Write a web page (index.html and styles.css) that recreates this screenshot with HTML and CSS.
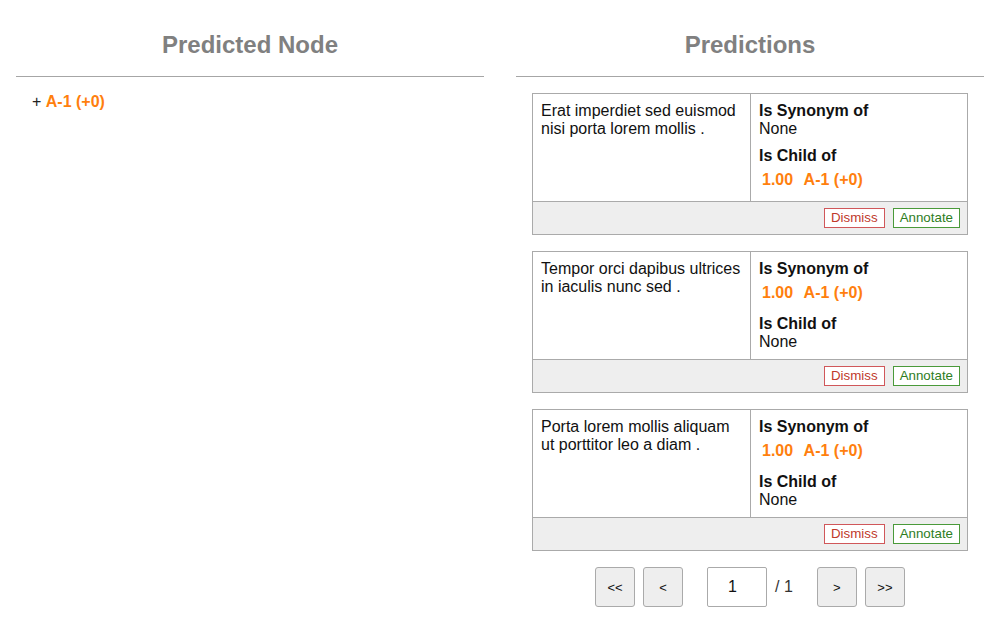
FILE: index.html
```html
<!DOCTYPE html>
<html>
<head>
<meta charset="utf-8">
<link rel="stylesheet" href="styles.css">
</head>
<body>
<div class="page">
  <section class="col">
    <h2 class="col-title">Predicted Node</h2>
    <div class="col-body">
      <div class="tree-node"><span class="plus">+</span> <span class="node">A-1 (+0)</span></div>
    </div>
  </section>
  <section class="col">
    <h2 class="col-title">Predictions</h2>
    <div class="col-body">
      <div class="cards">
        <div class="card">
          <div class="card-main">
            <div class="card-text">Erat imperdiet sed euismod nisi porta lorem mollis .</div>
            <div class="card-rel">
              <div class="rel">
                <div class="rel-label">Is Synonym of</div>
                <div class="rel-none">None</div>
              </div>
              <div class="rel">
                <div class="rel-label">Is Child of</div>
                <div class="rel-item"><span class="score">1.00</span> <span class="node">A-1 (+0)</span></div>
              </div>
            </div>
          </div>
          <div class="card-foot">
            <button class="btn btn-dismiss">Dismiss</button>
            <button class="btn btn-annotate">Annotate</button>
          </div>
        </div>
        <div class="card">
          <div class="card-main">
            <div class="card-text">Tempor orci dapibus ultrices in iaculis nunc sed .</div>
            <div class="card-rel">
              <div class="rel">
                <div class="rel-label">Is Synonym of</div>
                <div class="rel-item"><span class="score">1.00</span> <span class="node">A-1 (+0)</span></div>
              </div>
              <div class="rel">
                <div class="rel-label">Is Child of</div>
                <div class="rel-none">None</div>
              </div>
            </div>
          </div>
          <div class="card-foot">
            <button class="btn btn-dismiss">Dismiss</button>
            <button class="btn btn-annotate">Annotate</button>
          </div>
        </div>
        <div class="card">
          <div class="card-main">
            <div class="card-text">Porta lorem mollis aliquam ut porttitor leo a diam .</div>
            <div class="card-rel">
              <div class="rel">
                <div class="rel-label">Is Synonym of</div>
                <div class="rel-item"><span class="score">1.00</span> <span class="node">A-1 (+0)</span></div>
              </div>
              <div class="rel">
                <div class="rel-label">Is Child of</div>
                <div class="rel-none">None</div>
              </div>
            </div>
          </div>
          <div class="card-foot">
            <button class="btn btn-dismiss">Dismiss</button>
            <button class="btn btn-annotate">Annotate</button>
          </div>
        </div>
      </div>
      <div class="pager">
        <button class="pbtn">&lt;&lt;</button>
        <button class="pbtn">&lt;</button>
        <input class="pinput" type="text" value="1">
        <span class="ptotal">/ 1</span>
        <button class="pbtn">&gt;</button>
        <button class="pbtn">&gt;&gt;</button>
      </div>
    </div>
  </section>
</div>
</body>
</html>
```
FILE: styles.css
```css
* { box-sizing: border-box; }
html, body { margin: 0; padding: 0; background: #fff; }
body {
  font-family: "Liberation Sans", Arial, sans-serif;
  font-size: 16px;
  line-height: 18px;
  color: #111;
}
.page {
  display: grid;
  grid-template-columns: 500px 500px;
}
.col { padding: 0 16px; }
.col-title {
  margin: 0;
  padding-top: 31px;
  padding-bottom: 17px;
  font-size: 24px;
  line-height: 28px;
  font-weight: bold;
  text-align: center;
  color: #808080;
  border-bottom: 1px solid #a6a6a6;
}
.col-body { padding: 16px; }
.tree-node { line-height: 18px; }
.plus { color: #222; }
.node { color: #ff7f0e; font-weight: bold; }
.cards { display: flex; flex-direction: column; gap: 16px; }
.card { border: 1px solid #aaa; }
.card-main { display: grid; grid-template-columns: 218px 1fr; }
.card-text {
  padding: 8px 8px;
  border-right: 1px solid #aaa;
}
.card-rel { padding: 8px 8px; }
.rel + .rel { margin-top: 9px; }
.rel-label { font-weight: bold; }
.rel-item { padding: 6px 3px 4px; }
.rel-item span { padding: 0 3px; }
.rel-item .score { color: #ff7f0e; font-weight: bold; padding-left: 0; }
.card-foot {
  background: #eee;
  border-top: 1px solid #aaa;
  padding: 6px 7px 6px;
  display: flex;
  justify-content: flex-end;
  gap: 8px;
}
.btn {
  font-family: "Liberation Sans", Arial, sans-serif;
  font-size: 13.333px;
  line-height: 16px;
  height: 20px;
  padding: 1px 6px;
  background: #fff;
  border-radius: 0;
  cursor: pointer;
}
.btn-dismiss { color: #c0392b; border: 1px solid #d0575a; }
.btn-annotate { color: #2e7d1e; border: 1px solid #4a9a3a; }
.pager {
  display: flex;
  justify-content: center;
  align-items: center;
  margin-top: 16px;
  gap: 8px;
}
.pbtn {
  width: 40px;
  height: 40px;
  background: #eee;
  border: 1px solid #aaa;
  border-radius: 3px;
  font-family: "Liberation Sans", Arial, sans-serif;
  font-size: 13px;
  color: #111;
  padding: 0;
}
.pinput {
  width: 60px;
  height: 40px;
  margin-left: 16px;
  border: 1px solid #aaa;
  border-radius: 2px;
  padding: 0 0 0 20px;
  font-family: "Liberation Sans", Arial, sans-serif;
  font-size: 16px;
  color: #111;
}
.ptotal { margin-right: 16px; color: #333; }
```
